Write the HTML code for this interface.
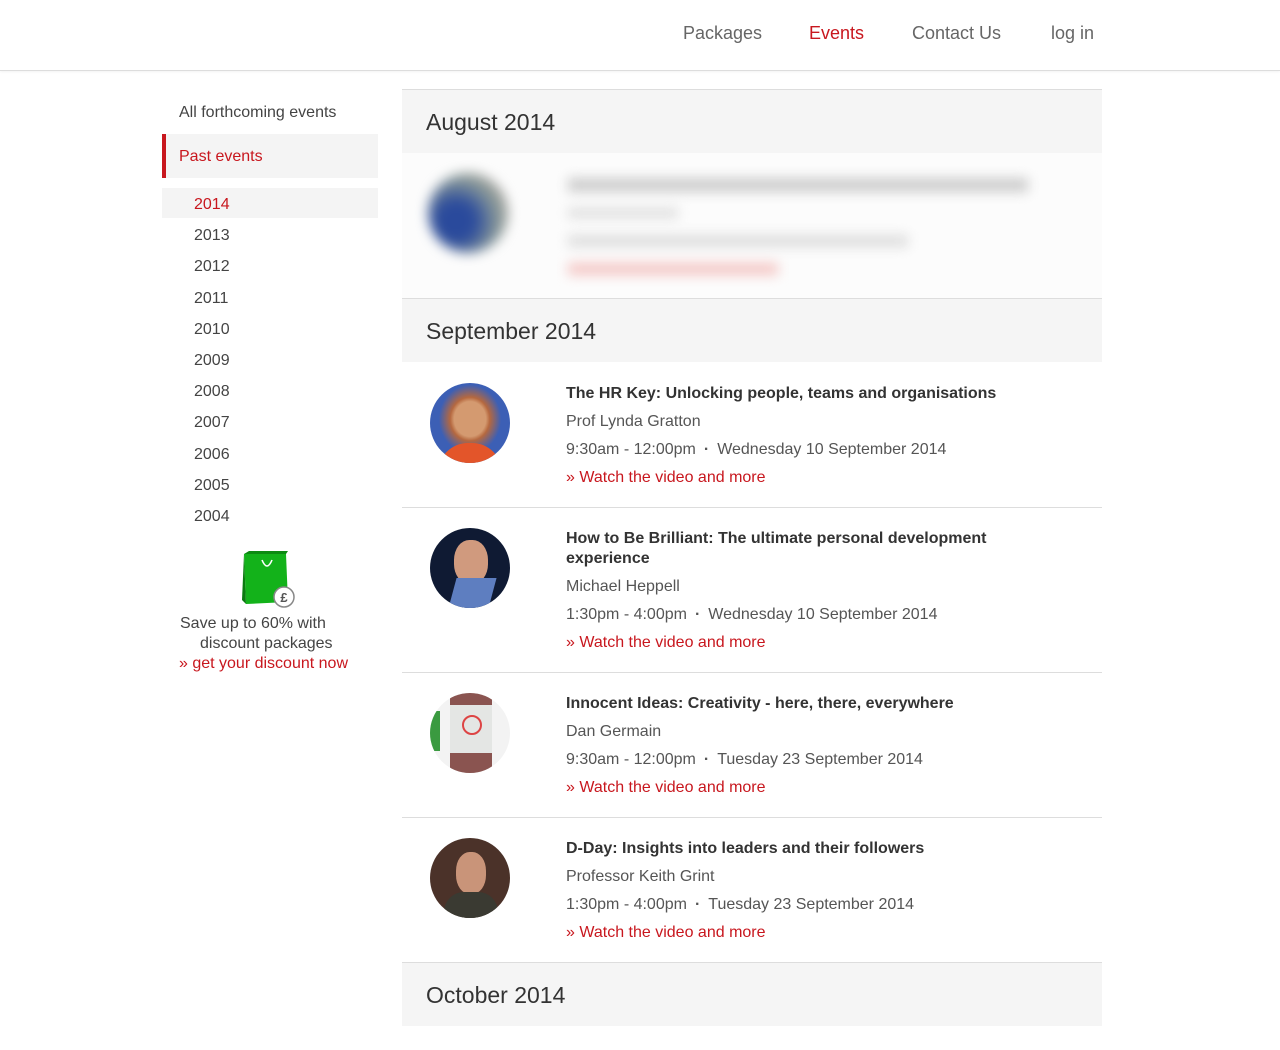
<!DOCTYPE html>
<html><head><meta charset="utf-8"><style>
*{margin:0;padding:0;box-sizing:border-box}
body{width:1280px;height:1050px;background:#fff;font-family:"Liberation Sans",sans-serif;color:#444;position:relative;overflow:hidden}
.a{position:absolute;white-space:nowrap}
.hdr{position:absolute;left:0;top:0;width:1280px;height:71px;border-bottom:1px solid #ddd;box-shadow:0 1px 2px rgba(0,0,0,.05)}
.nav{font-size:18px;color:#666;top:23px}
.side{font-size:16px;color:#444}
.mh{position:absolute;left:402px;width:700px;height:64px;background:#f5f5f5;border-top:1px solid #ddd}
.mh span{position:absolute;left:24px;top:19px;font-size:23px;color:#333}
.ev{position:absolute;left:402px;width:700px;border-bottom:1px solid #ddd}
.av{position:absolute;left:28px;top:21px;width:80px;height:80px;border-radius:50%;overflow:hidden}
.tx{position:absolute;left:164px;top:22px;width:470px}
.t{font-weight:bold;font-size:16px;color:#333;line-height:20px;white-space:normal}
.l{font-size:16px;line-height:28px;color:#555}
.dot{margin:0 8px;font-weight:bold}
.a.red,.l.red,.red{color:#c8171e}
</style></head><body>
<div class="hdr"></div>
<div class="a nav" style="left:683px">Packages</div>
<div class="a nav red" style="left:809px">Events</div>
<div class="a nav" style="left:912px">Contact Us</div>
<div class="a nav" style="left:1051px">log in</div>

<div class="a side" style="left:179px;top:104px">All forthcoming events</div>
<div class="a" style="left:162px;top:134px;width:216px;height:44px;background:#f4f4f4;border-left:4px solid #c8171e"></div>
<div class="a side red" style="left:179px;top:148px">Past events</div>
<div class="a" style="left:162px;top:188px;width:216px;height:30px;background:#f4f4f4"></div>
<div class="a side red" style="left:194px;top:196px">2014</div>
<div class="a side" style="left:194px;top:227px">2013</div>
<div class="a side" style="left:194px;top:258px">2012</div>
<div class="a side" style="left:194px;top:290px">2011</div>
<div class="a side" style="left:194px;top:321px">2010</div>
<div class="a side" style="left:194px;top:352px">2009</div>
<div class="a side" style="left:194px;top:383px">2008</div>
<div class="a side" style="left:194px;top:414px">2007</div>
<div class="a side" style="left:194px;top:446px">2006</div>
<div class="a side" style="left:194px;top:477px">2005</div>
<div class="a side" style="left:194px;top:508px">2004</div>

<svg class="a" style="left:240px;top:550px" width="58" height="60" viewBox="0 0 58 60">
<path d="M4 4 L46 4 L48 52 L6 54 Z" fill="#13b21a"/><path d="M4 4 L9 1 L48 1 L46 4Z" fill="#0c8a12"/><path d="M4 4 L6 54 L2 50Z" fill="#0a7a10"/>
<path d="M22 10 Q27 22 32 10" stroke="#fff" stroke-width="1.6" fill="none"/>
<circle cx="44" cy="47" r="10" fill="#fff" stroke="#888" stroke-width="1.5"/>
<text x="44" y="52" font-size="13" font-weight="bold" text-anchor="middle" fill="#555" font-family="Liberation Sans">£</text></svg>
<div class="a side" style="left:180px;top:615px">Save up to 60% with</div>
<div class="a side" style="left:200px;top:635px">discount packages</div>
<div class="a side red" style="left:179px;top:655px">» get your discount now</div>

<div class="mh" style="top:89px"><span>August 2014</span></div>
<div class="ev" style="top:153px;height:146px;background:#fcfcfc">
<div style="position:absolute;left:26px;top:20px;width:80px;height:80px;border-radius:50%;background:radial-gradient(circle at 35% 60%,#2a4a9c 0 25%,#8a9a98 60%,#c9a9a0);filter:blur(6px)"></div>
<div style="position:absolute;left:166px;top:25px;width:460px;height:14px;background:#ccc;filter:blur(6px)"></div>
<div style="position:absolute;left:166px;top:55px;width:110px;height:10px;background:#ddd;filter:blur(6px)"></div>
<div style="position:absolute;left:166px;top:82px;width:340px;height:12px;background:#ddd;filter:blur(6px)"></div>
<div style="position:absolute;left:166px;top:110px;width:210px;height:12px;background:#f4c6c4;filter:blur(6px)"></div>
</div>
<div class="mh" style="top:298px"><span>September 2014</span></div>

<div class="ev" style="top:362px;height:146px">
<div class="av" style="background:radial-gradient(ellipse at 50% 45%,#d49a70 0 28%,#b5683f 35%,#3c5fb5 55%);"><div style="position:absolute;left:8px;top:60px;width:64px;height:30px;background:#e3552a;border-radius:30px 30px 0 0"></div></div>
<div class="tx"><div class="t">The HR Key: Unlocking people, teams and organisations</div>
<div class="l" style="margin-top:4px">Prof Lynda Gratton</div>
<div class="l">9:30am - 12:00pm<span class="dot">·</span>Wednesday 10 September 2014</div>
<div class="l red">» Watch the video and more</div></div></div>

<div class="ev" style="top:507px;height:166px">
<div class="av" style="background:#0f1a33"><div style="position:absolute;left:24px;top:12px;width:34px;height:44px;border-radius:45%;background:#d09a7e"></div><div style="position:absolute;left:22px;top:50px;width:40px;height:34px;background:#5e7ec0;transform:skewX(-15deg)"></div></div>
<div class="tx"><div class="t">How to Be Brilliant: The ultimate personal development experience</div>
<div class="l" style="margin-top:4px">Michael Heppell</div>
<div class="l">1:30pm - 4:00pm<span class="dot">·</span>Wednesday 10 September 2014</div>
<div class="l red">» Watch the video and more</div></div></div>

<div class="ev" style="top:672px;height:146px">
<div class="av" style="background:#f3f3f3"><div style="position:absolute;left:0;top:18px;width:10px;height:40px;background:#3a9a40"></div><div style="position:absolute;left:20px;top:0;width:42px;height:80px;background:#e4e6e4;border-radius:8px"></div><div style="position:absolute;left:20px;top:0;width:42px;height:12px;background:#8a5450"></div><div style="position:absolute;left:20px;top:60px;width:42px;height:20px;background:#8a5450"></div><div style="position:absolute;left:32px;top:22px;width:20px;height:20px;border:2px solid #d44;border-radius:50%"></div></div>
<div class="tx"><div class="t">Innocent Ideas: Creativity - here, there, everywhere</div>
<div class="l" style="margin-top:4px">Dan Germain</div>
<div class="l">9:30am - 12:00pm<span class="dot">·</span>Tuesday 23 September 2014</div>
<div class="l red">» Watch the video and more</div></div></div>

<div class="ev" style="top:817px;height:146px">
<div class="av" style="background:#4b3229"><div style="position:absolute;left:26px;top:14px;width:30px;height:42px;border-radius:45%;background:#c99479"></div><div style="position:absolute;left:14px;top:54px;width:54px;height:30px;background:#3a3a32;border-radius:20px 20px 0 0"></div></div>
<div class="tx"><div class="t">D-Day: Insights into leaders and their followers</div>
<div class="l" style="margin-top:4px">Professor Keith Grint</div>
<div class="l">1:30pm - 4:00pm<span class="dot">·</span>Tuesday 23 September 2014</div>
<div class="l red">» Watch the video and more</div></div></div>

<div class="mh" style="top:962px"><span>October 2014</span></div>
</body></html>
